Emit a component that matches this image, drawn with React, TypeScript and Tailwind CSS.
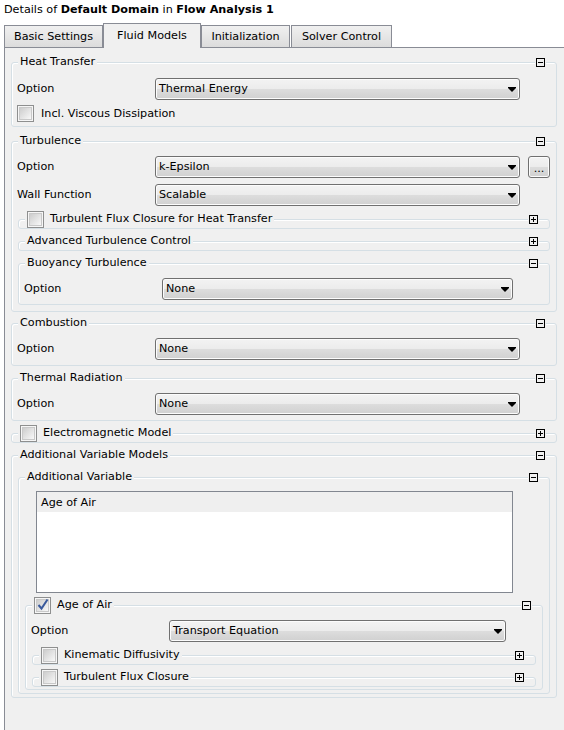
import type { ReactNode } from "react";

const frame =
  "rounded-[3px] border border-[#d5dfe5] shadow-[inset_1px_1px_0_#fff]";

function ToggleIcon({ open }: { open: boolean }) {
  return (
    <span className="bg-[#f0f0f0] px-[1px]">
      <svg width="9" height="9" viewBox="0 0 9 9" className="block" shapeRendering="crispEdges">
        <rect x="0.5" y="0.5" width="8" height="8" fill="none" stroke="#000" />
        <path d="M2 4.5h5" stroke="#000" />
        {!open && <path d="M4.5 2v5" stroke="#000" />}
      </svg>
    </span>
  );
}

function CheckBox({ checked = false }: { checked?: boolean }) {
  return (
    <span className="flex h-[17px] w-[17px] shrink-0 items-center justify-center border border-[#8e8f8f] bg-[#f6f6f6]">
      <span className="relative h-[13px] w-[13px] border border-[#c9c9c9] bg-[linear-gradient(135deg,#cdcdcd,#f8f8f8)]">
        {checked && (
          <svg width="13" height="13" viewBox="0 0 13 13" className="absolute -left-[1px] -top-[2px] overflow-visible">
            <path d="M2.5 7 L5.5 10.5 L11.5 1.5" fill="none" stroke="#3a5a9c" strokeWidth="2" />
          </svg>
        )}
      </span>
    </span>
  );
}

function Arrow() {
  return (
    <svg width="8" height="5" viewBox="0 0 8 5" className="block">
      <polygon points="0,0 8,0 8,1 4,5 0,1" fill="#000" />
    </svg>
  );
}

const bevel =
  "rounded-[3px] border border-[#707070] bg-[linear-gradient(to_bottom,#f3f3f3_0%,#ececec_48%,#dddddd_50%,#d0d0d0_100%)] shadow-[inset_0_0_0_1px_#fcfcfc]";

function Combo({ value }: { value: string }) {
  return (
    <div className={`flex h-[22px] min-w-0 flex-1 items-center justify-between pl-[3px] pr-[3px] ${bevel}`}>
      <span className="pt-[1px]">{value}</span>
      <Arrow />
    </div>
  );
}

function ComboRow({
  label,
  value,
  extra,
  className = "",
}: {
  label: string;
  value: string;
  extra?: ReactNode;
  className?: string;
}) {
  return (
    <div className={`flex h-[22px] items-center pl-[5px] pr-[6px] ${className}`}>
      <span className="w-[138px] shrink-0 pt-[1px]">{label}</span>
      <Combo value={value} />
      <span className="flex w-[30px] shrink-0 justify-end">{extra}</span>
    </div>
  );
}

function Group({
  title,
  check,
  open = true,
  className = "",
  children,
}: {
  title: string;
  check?: boolean;
  open?: boolean;
  className?: string;
  children?: ReactNode;
}) {
  return (
    <div className={`${frame} ${className}`}>
      <div className="-mt-[10px] flex h-[18px] items-center pl-[6px] pr-[10px]">
        <span className="flex h-[18px] items-center gap-[6px] bg-[#f0f0f0] px-[2px]">
          {check !== undefined && <CheckBox checked={check} />}
          <span className="pt-[1px]">{title}</span>
        </span>
        <span className="flex-1" />
        <ToggleIcon open={open} />
      </div>
      {open && children}
    </div>
  );
}

const tabBase = "flex items-center justify-center border border-b-0 border-[#898c95]";
const idleTab = "h-[22px] bg-[linear-gradient(to_bottom,#f0f0f0,#dcdcdc)] pt-[1px]";

export default function App() {
  return (
    <div className="flex h-[730px] w-[564px] flex-col bg-white pl-[4px] font-['DejaVu_Sans',sans-serif] text-[11.2px] text-black">
      <div className="h-[17px] pt-[1px] leading-[17px]">
        Details of <b>Default Domain</b> in <b>Flow Analysis 1</b>
      </div>

      <div className="mt-[6px] flex h-[24px] items-end">
        <div className={`${tabBase} ${idleTab} w-[99px]`}>Basic Settings</div>
        <div className={`${tabBase} relative z-10 -mb-[1px] h-[25px] w-[98px] items-start bg-[#f0f0f0] pt-[4px]`}>
          Fluid Models
        </div>
        <div className={`${tabBase} ${idleTab} w-[89px]`}>Initialization</div>
        <div className={`${tabBase} ${idleTab} ml-[1px] w-[101px]`}>Solver Control</div>
      </div>

      <div className="flex-1 border-l border-t border-[#898c95] bg-[#f0f0f0] pl-[6px] pr-[7px]">
        <Group title="Heat Transfer" className="mt-[14px] pb-[4px]">
          <ComboRow label="Option" value="Thermal Energy" className="mt-[7px]" />
          <div className="mt-[5px] flex h-[17px] items-center gap-[7px] pl-[5px]">
            <CheckBox />
            <span className="pt-[1px]">Incl. Viscous Dissipation</span>
          </div>
        </Group>

        <Group title="Turbulence" className="mt-[14px] pb-[6px]">
          <ComboRow
            label="Option"
            value="k-Epsilon"
            className="mt-[6px]"
            extra={
              <span className={`flex h-[22px] w-[22px] items-end justify-center pb-[3px] leading-none ${bevel}`}>
                ...
              </span>
            }
          />
          <ComboRow label="Wall Function" value="Scalable" className="mt-[6px]" />
          <Group title="Turbulent Flux Closure for Heat Transfer" check={false} open={false} className="mx-[6px] mt-[13px]" />
          <Group title="Advanced Turbulence Control" open={false} className="mx-[6px] mt-[12px]" />
          <Group title="Buoyancy Turbulence" className="mx-[6px] mt-[12px] pb-[4px]">
            <ComboRow label="Option" value="None" className="mt-[6px]" />
          </Group>
        </Group>

        <Group title="Combustion" className="mt-[11px] pb-[5px]">
          <ComboRow label="Option" value="None" className="mt-[6px]" />
        </Group>

        <Group title="Thermal Radiation" className="mt-[12px] pb-[5px]">
          <ComboRow label="Option" value="None" className="mt-[6px]" />
        </Group>

        <Group title="Electromagnetic Model" check={false} open={false} className="mt-[12px]" />

        <Group title="Additional Variable Models" className="mt-[12px] pb-[3px]">
          <Group title="Additional Variable" className="mx-[6px] mt-[13px] pb-[3px]">
            <div className="ml-[17px] mr-[36px] mt-[5px] h-[102px] border border-[#828790] bg-white">
              <div className="h-[20px] bg-[#efefef] pl-[4px] pt-[1px] leading-[20px]">Age of Air</div>
            </div>
            <Group title="Age of Air" check className="mx-[6px] mt-[12px] pb-[2px]">
              <ComboRow label="Option" value="Transport Equation" className="mt-[6px]" />
              <Group title="Kinematic Diffusivity" check={false} open={false} className="mx-[6px] mt-[13px]" />
              <Group title="Turbulent Flux Closure" check={false} open={false} className="mx-[6px] mt-[12px]" />
            </Group>
          </Group>
        </Group>
      </div>
    </div>
  );
}
